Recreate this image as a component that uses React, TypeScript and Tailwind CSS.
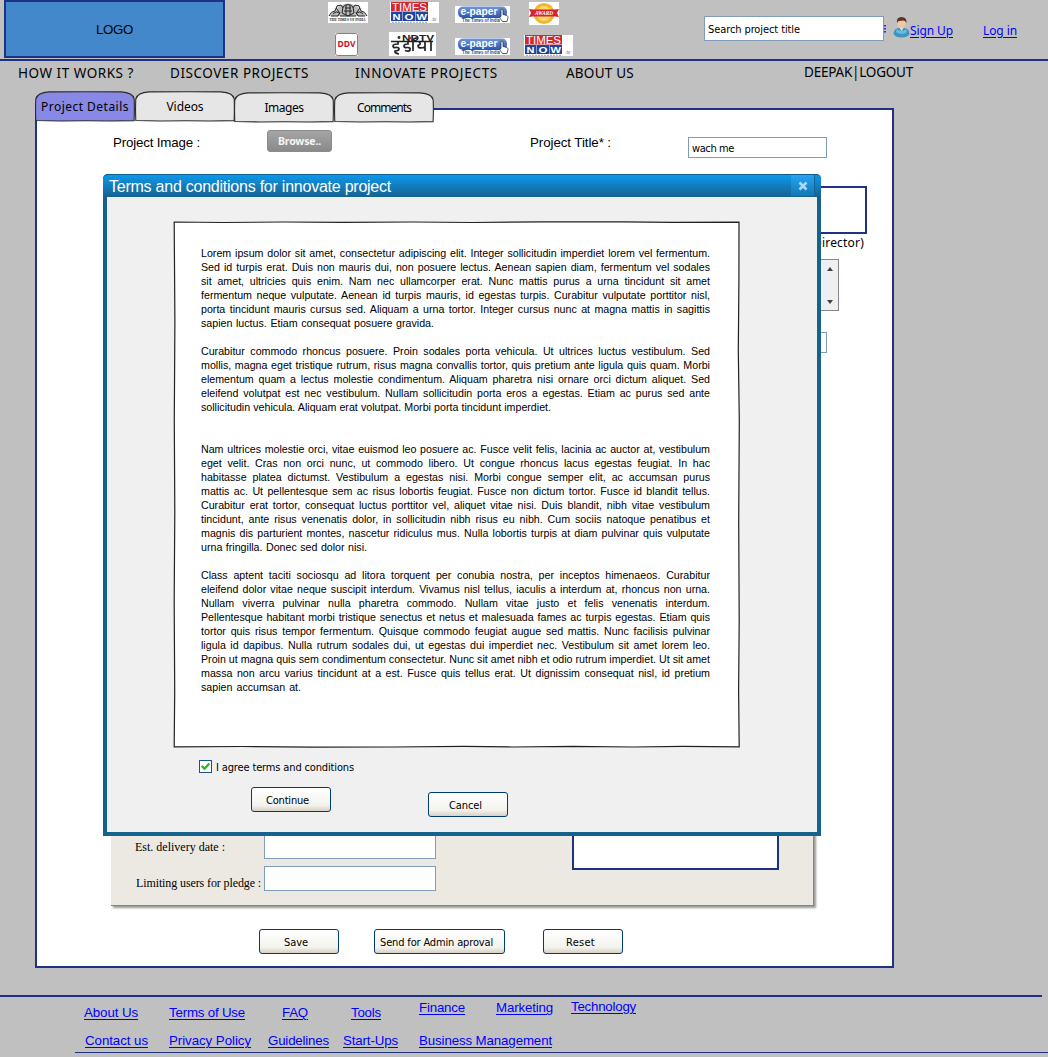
import { useLayoutEffect, useRef, useState } from "react";

type FitProps = {
  children: string;
  className?: string;
  by?: "letter" | "word";
  as?: "span" | "a";
};

// Spreads or tightens a single line of text so that it fills its box.
function Fit({ children, className = "", by = "letter", as: Tag = "span" }: FitProps) {
  const box = useRef<HTMLDivElement>(null);
  const line = useRef<HTMLElement>(null);
  const [gap, setGap] = useState(0);
  useLayoutEffect(() => {
    if (!box.current || !line.current) return;
    const count = by === "word" ? children.split(" ").length - 1 : children.length;
    const free = box.current.getBoundingClientRect().width - line.current.getBoundingClientRect().width;
    if (count > 0) setGap(free / count);
  }, []);
  return (
    <div ref={box} className={`shrink-0 whitespace-nowrap ${className}`}>
      <Tag
        ref={line as never}
        className={Tag === "a" ? "underline underline-offset-2" : ""}
        style={by === "word" ? { wordSpacing: gap } : { letterSpacing: gap }}
      >
        {children}
      </Tag>
    </div>
  );
}

const comic = "font-['Comic_Sans_MS','Noto_Sans',sans-serif]";
const tahoma = "font-['Tahoma','DejaVu_Sans_Condensed','Noto_Sans',sans-serif]";

function TimesNow({ className }: { className: string }) {
  return (
    <svg className={`shrink-0 overflow-visible ${className}`} width="49" height="21" viewBox="0 0 49 21">
      <rect width="49" height="21" fill="#fff" />
      <rect x="1" width="37" height="9.500" fill="#cf2a30" />
      <rect x="1" y="10" width="11.500" height="9" fill="#1f459c" />
      <rect x="13" y="10" width="12" height="9" fill="#1f459c" />
      <rect x="25.500" y="10" width="12.500" height="9" fill="#1f459c" />
      <g fill="#fff" fontFamily="Liberation Sans, sans-serif">
        <text x="2" y="8.500" fontSize="10.500" textLength="35" lengthAdjust="spacingAndGlyphs">TIMES</text>
        <g fontSize="9.500" fontWeight="bold">
          <text x="2.500" y="18" textLength="8" lengthAdjust="spacingAndGlyphs">N</text>
          <text x="14.500" y="18" textLength="9" lengthAdjust="spacingAndGlyphs">O</text>
          <text x="26.500" y="18" textLength="10.500" lengthAdjust="spacingAndGlyphs">W</text>
        </g>
      </g>
      <path d="M2 20.300h35" stroke="#7a7a9a" strokeWidth=".7" strokeDasharray="2 1" />
      <text x="41" y="19" fontSize="5" fill="#667" fontFamily="Liberation Sans, sans-serif">.tv</text>
    </svg>
  );
}

function EPaper({ className }: { className: string }) {
  return (
    <svg className={`shrink-0 overflow-visible ${className}`} width="55" height="17" viewBox="0 0 55 17">
      <defs>
        <linearGradient id="ep" x1="0" x2="0" y1="0" y2="1">
          <stop offset="0" stopColor="#7395d6" />
          <stop offset="1" stopColor="#2a55b0" />
        </linearGradient>
      </defs>
      <rect width="55" height="17" fill="#fff" />
      <rect x="3" y=".5" width="49" height="11.500" rx="5" fill="url(#ep)" />
      <text x="5.500" y="9" fontSize="10.500" fontWeight="bold" fill="#fff" textLength="37" lengthAdjust="spacingAndGlyphs" fontFamily="Liberation Sans, sans-serif">e-paper</text>
      <text x="7" y="16" fontSize="4.800" fontWeight="bold" fill="#334c7c" textLength="38" lengthAdjust="spacingAndGlyphs" fontFamily="Liberation Sans, sans-serif">The Times of India</text>
      <path d="M46 4.500q0-1.500 1-1.500t1 1.500v4l4 1q1 .5 1 2l-1 4h-4.500l-3-4 1.500-1z" fill="#fff" stroke="#222" strokeWidth=".7" />
    </svg>
  );
}

function TimesOfIndia() {
  return (
    <svg className="mt-0.5 shrink-0 overflow-visible" width="40" height="21" viewBox="0 0 40 21">
      <rect width="40" height="21" fill="#fff" />
      <path d="M2 14q2-5 6-5l2-4 4-2q6-3 12 0l4 2 2 4q4 0 6 5z" fill="#bbb" />
      <g stroke="#222" fill="none" strokeWidth="1">
        <path d="M1 14q2-5 6-5l2-5 4-1 2 3M39 14q-2-5-6-5l-2-5-4-1-2 3M3 14h7l2-4M37 14h-7l-2-4" />
        <path d="M15 5q5-5 10 0l1 6-6 3-6-3zM17 6h6M16 9h8M18 3v10M22 3v10M5 12q4-4 7 0M35 12q-4-4-7 0" />
        <path d="M8 6l3 4M32 6l-3 4M12 14h16" />
      </g>
      <text x="1.500" y="19" fontSize="4.500" fontWeight="bold" fill="#222" textLength="36" lengthAdjust="spacingAndGlyphs" fontFamily="Liberation Serif, serif">THE TIMES OF INDIA</text>
    </svg>
  );
}

function Medal() {
  return (
    <svg className="ml-[19px] mt-0.5 shrink-0" width="30" height="23" viewBox="0 0 30 23">
      <rect width="30" height="23" fill="#fff" />
      <circle cx="15" cy="11.500" r="10.500" fill="#efb72c" />
      <circle cx="15" cy="11.500" r="7.500" fill="#fbd968" />
      <path d="M0 7l4 .5 22 0 4-.5-2 4 2 4-4-.5-22 0-4 .5 2-4z" fill="#d7232a" />
      <text x="6" y="13" fontSize="6" fontWeight="bold" fontStyle="italic" fill="#fff" textLength="18" lengthAdjust="spacingAndGlyphs" fontFamily="Liberation Serif, serif">AWARD</text>
    </svg>
  );
}

function Ddv() {
  return (
    <svg className="ml-[15px] mt-px shrink-0" width="23" height="23" viewBox="0 0 23 23">
      <rect width="23" height="23" rx="1" fill="#fff" />
      <rect x=".5" y=".5" width="22" height="22" rx="2" fill="#fff" stroke="#b8384c" strokeWidth=".8" />
      <text x="2.500" y="14" fontSize="9" fontWeight="bold" fill="#c8102e" textLength="18" lengthAdjust="spacingAndGlyphs" fontFamily="Noto Sans, sans-serif">DDV</text>
    </svg>
  );
}

function NdtvIndia() {
  return (
    <svg className="ml-[31px] shrink-0 overflow-visible" width="47" height="24" viewBox="0 0 47 24">
      <rect width="47" height="24" fill="#fff" />
      <text x="13" y="9" fontSize="9" fontWeight="bold" fill="#222" textLength="32" lengthAdjust="spacingAndGlyphs" fontFamily="Liberation Sans, sans-serif">NDTV</text>
      <circle cx="22" cy="6" r="1.200" fill="#d22" />
      <g fill="none" stroke="#222" strokeWidth="1.700">
        <path d="M2 9.500h42" />
        <path d="M9 9.500v2.500q-5 0-5 2t3 1.500q3-.3 3 1.500t-4 2q-1 2 4 3" />
        <path d="M19 9.500v2.500q-4 0-4 2t3 1.500q4-.2 3 2.500-1 2-5 .5" />
        <path d="M24 19V9.500q0-3.500 4-3.500" />
        <path d="M30 9.500q3 2.500-1 4 0 4 7 1.500M36 9.500V19M42 9.500V19" />
        <circle cx="10" cy="5.500" r=".6" />
      </g>
    </svg>
  );
}

function UserIcon() {
  return (
    <svg className="mt-[17px] shrink-0" width="17" height="21" viewBox="0 0 17 21">
      <path d="M.5 17q0-5 5-6h6q5 1 5 6-2 3.500-8 3.500T.5 17z" fill="#3b95bf" />
      <path d="M4 12q4 4 9 0l1 3q-5 4-11 0z" fill="#6bbbe0" />
      <path d="M6 10l2.500 4 2.500-4z" fill="#f7e6d4" />
      <ellipse cx="8.500" cy="6.500" rx="4" ry="5" fill="#f0c9a4" />
      <path d="M4 6Q3 0 8.500 0T13.500 6q-1-2.500-3-2.500T5.500 4z" fill="#5b3423" />
    </svg>
  );
}

function Header() {
  return (
    <header className="flex h-[61px] shrink-0 border-b-2 border-[#1d3282]">
      <div className="ml-1 flex h-[58px] w-[221px] shrink-0 items-center justify-center border-2 border-[#1d3282] bg-[#4488cc]">
        <Fit className="mt-0.5 w-[37px] font-['Liberation_Sans',sans-serif] text-[13.3px] leading-4">LOGO</Fit>
      </div>
      <div className="ml-[103px] w-[270px] shrink-0">
        <div className="flex h-8">
          <TimesOfIndia />
          <TimesNow className="ml-[22px] mt-0.5" />
          <EPaper className="ml-4 mt-1.5" />
          <Medal />
        </div>
        <div className="-ml-2 flex h-7">
          <Ddv />
          <NdtvIndia />
          <EPaper className="ml-[19px] mt-1.5" />
          <TimesNow className="ml-3.5 mt-[3px]" />
        </div>
      </div>
      <div className="ml-[106px] mt-4 flex h-[25px] w-[180px] shrink-0 items-center border border-[#7f9db9] bg-white pl-[3px] pt-0.5">
        <Fit className={`w-[92px] text-[11px] leading-4 ${tahoma}`}>Search project title</Fit>
      </div>
      <svg className="mt-[25px] shrink-0" width="2" height="9" viewBox="0 0 2 9">
        <path d="M1 0v9" stroke="#0000ff" strokeWidth="1.500" strokeDasharray="1.500 1.500" />
      </svg>
      <div className="ml-[7px] flex">
        <UserIcon />
        <Fit as="a" className={`mt-[23px] w-[43px] text-[12px] leading-4 text-[#0000ff] ${comic}`}>Sign Up</Fit>
        <Fit as="a" className={`ml-[30px] mt-[23px] w-[34px] text-[12px] leading-4 text-[#0000ff] ${comic}`}>Log in</Fit>
      </div>
    </header>
  );
}

function Nav() {
  return (
    <nav className={`flex h-[30px] shrink-0 pl-[18px] pt-1 text-[13.5px] leading-4 ${comic}`}>
      <Fit className="w-[116px]">HOW IT WORKS ?</Fit>
      <Fit className="ml-9 w-[139px]">DISCOVER PROJECTS</Fit>
      <Fit className="ml-[46px] w-[143px]">INNOVATE PROJECTS</Fit>
      <Fit className="ml-[68px] w-[68px]">ABOUT US</Fit>
      <Fit className="-mt-px ml-[170px] w-[109px]">DEEPAK|LOGOUT</Fit>
    </nav>
  );
}

function Tab({ label, width, active, className = "" }: { label: string; width: string; active?: boolean; className?: string }) {
  return (
    <div className={`relative flex h-[31px] w-[100px] shrink-0 justify-center pt-2 ${className}`}>
      <svg className="absolute inset-0" width="100" height="31" viewBox="0 0 100 31">
        <path
          d="M.8 29.500Q.3 18 .8 8Q2.500 1.500 14 .9L52 .7 86 .9Q98 1.500 99.200 8q.4 12-.1 21.600L75 30l-24-.2-25 .2z"
          fill={active ? "#8888e6" : "#e6e6e6"}
          stroke="#2b2b2b"
          strokeWidth="1.100"
        />
      </svg>
      <Fit className={`relative text-[12px] leading-4 ${comic} ${width}`}>{label}</Fit>
    </div>
  );
}

function Btn({ label, className, text }: { label: string; className: string; text: string }) {
  return (
    <button className={`flex h-[25px] shrink-0 items-center rounded-[3px] border border-[#003c74] bg-linear-to-b from-white via-[#f3f3ee] via-75% to-[#d8d0c4] pt-0.5 text-left ${className}`}>
      <Fit className={`text-[11px] leading-4 ${tahoma} ${text}`}>{label}</Fit>
    </button>
  );
}

function Panel() {
  return (
    <main className="-mt-[14px] ml-[35px] flex h-[860px] w-[859px] shrink-0 flex-col border-2 border-[#1d3282] bg-white">
      <div className="flex h-[76px] shrink-0 font-['Liberation_Sans',sans-serif] text-[13.3px] leading-4">
        <Fit className="ml-[76px] mt-[25px] w-[87px]">Project Image :</Fit>
        <button className="ml-[67px] mt-5 flex h-[22px] w-[65px] items-center justify-center rounded-[3px] border border-[#8b8b8b] bg-linear-to-b from-[#a5a5a5] to-[#8a8a8a]">
          <Fit className="w-[43px] font-['Noto_Sans',sans-serif] text-[10.5px] font-bold leading-4 text-[#f5f5f5]">Browse..</Fit>
        </button>
        <Fit className="ml-[198px] mt-[25px] w-[81px]">Project Title* :</Fit>
        <div className="ml-[77px] mt-[27px] flex h-[21px] w-[139px] items-center border border-[#7f9db9] pl-[3px] pt-0.5">
          <Fit className={`w-[42px] text-[11px] leading-4 ${tahoma}`}>wach me</Fit>
        </div>
      </div>
      <div className="flex shrink-0 flex-col items-end">
        <div className="mr-[25px] h-12 w-[180px] border-2 border-[#1d3282]" />
        <Fit className={`mr-7 mt-px w-[51px] text-[12px] leading-4 ${comic}`}>Director)</Fit>
        <div className="mr-[53px] mt-2 flex h-[52px] w-[160px] justify-end border border-[#828790]">
          <div className="flex w-[17px] flex-col items-center justify-between bg-[#efefef] pb-1.5 pt-[7px]">
            <span className="size-0 border-x-[3px] border-b-4 border-x-transparent border-b-[#404040]" />
            <span className="size-0 border-x-[3px] border-t-4 border-x-transparent border-t-[#404040]" />
          </div>
        </div>
        <div className="mr-[65px] mt-[21px] h-[21px] w-[139px] border border-[#7f9db9]" />
      </div>
      <section className="ml-[74px] mt-auto flex h-[206px] w-[703px] shrink-0 items-end border-b border-r border-[#858585] bg-[#ece9e2] font-['Liberation_Serif',serif] text-[12px] leading-4 shadow-[2px_2px_2px_#999]">
        <div className="ml-6 flex h-[71px] w-[129px] flex-col">
          <Fit className="mt-[5px] w-[90px]">Est. delivery date :</Fit>
          <Fit className="ml-px mt-5 w-[125px]">Limiting users for pledge :</Fit>
        </div>
        <div className="h-[71px]">
          <div className="h-[25px] w-[172px] border border-[#7f9db9] bg-white" />
          <div className="mt-[7px] h-[25px] w-[172px] border border-[#7f9db9] bg-white" />
        </div>
        <div className="mb-[35px] ml-[136px] h-[50px] w-[207px] border-2 border-[#1d3282] bg-white" />
      </section>
      <div className="mt-[23px] flex h-[37px] shrink-0">
        <Btn label="Save" className="ml-[222px] w-20 pl-6" text="w-[24px]" />
        <Btn label="Send for Admin aproval" className="ml-[35px] w-[131px] pl-[5px]" text="w-[113px]" />
        <Btn label="Reset" className="ml-[38px] w-20 pl-[22px]" text="w-[29px]" />
      </div>
    </main>
  );
}

const terms: { lines: string[]; last: string; space: string }[] = [
  {
    space: "",
    last: "w-[233px]",
    lines: [
      "Lorem ipsum dolor sit amet, consectetur adipiscing elit. Integer sollicitudin imperdiet lorem vel fermentum.",
      "Sed id turpis erat. Duis non mauris dui, non posuere lectus. Aenean sapien diam, fermentum vel sodales",
      "sit amet, ultricies quis enim. Nam nec ullamcorper erat. Nunc mattis purus a urna tincidunt sit amet",
      "fermentum neque vulputate. Aenean id turpis mauris, id egestas turpis. Curabitur vulputate porttitor nisl,",
      "porta tincidunt mauris cursus sed. Aliquam a urna tortor. Integer cursus nunc at magna mattis in sagittis",
      "sapien luctus. Etiam consequat posuere gravida.",
    ],
  },
  {
    space: "mt-3.5",
    last: "w-[350px]",
    lines: [
      "Curabitur commodo rhoncus posuere. Proin sodales porta vehicula. Ut ultrices luctus vestibulum. Sed",
      "mollis, magna eget tristique rutrum, risus magna convallis tortor, quis pretium ante ligula quis quam. Morbi",
      "elementum quam a lectus molestie condimentum. Aliquam pharetra nisi ornare orci dictum aliquet. Sed",
      "eleifend volutpat est nec vestibulum. Nullam sollicitudin porta eros a egestas. Etiam ac purus sed ante",
      "sollicitudin vehicula. Aliquam erat volutpat. Morbi porta tincidunt imperdiet.",
    ],
  },
  {
    space: "mt-7",
    last: "w-[166px]",
    lines: [
      "Nam ultrices molestie orci, vitae euismod leo posuere ac. Fusce velit felis, lacinia ac auctor at, vestibulum",
      "eget velit. Cras non orci nunc, ut commodo libero. Ut congue rhoncus lacus egestas feugiat. In hac",
      "habitasse platea dictumst. Vestibulum a egestas nisi. Morbi congue semper elit, ac accumsan purus",
      "mattis ac. Ut pellentesque sem ac risus lobortis feugiat. Fusce non dictum tortor. Fusce id blandit tellus.",
      "Curabitur erat tortor, consequat luctus porttitor vel, aliquet vitae nisi. Duis blandit, nibh vitae vestibulum",
      "tincidunt, ante risus venenatis dolor, in sollicitudin nibh risus eu nibh. Cum sociis natoque penatibus et",
      "magnis dis parturient montes, nascetur ridiculus mus. Nulla lobortis turpis at diam pulvinar quis vulputate",
      "urna fringilla. Donec sed dolor nisi.",
    ],
  },
  {
    space: "mt-3.5",
    last: "w-[100px]",
    lines: [
      "Class aptent taciti sociosqu ad litora torquent per conubia nostra, per inceptos himenaeos. Curabitur",
      "eleifend dolor vitae neque suscipit interdum. Vivamus nisl tellus, iaculis a interdum at, rhoncus non urna.",
      "Nullam viverra pulvinar nulla pharetra commodo. Nullam vitae justo et felis venenatis interdum.",
      "Pellentesque habitant morbi tristique senectus et netus et malesuada fames ac turpis egestas. Etiam quis",
      "tortor quis risus tempor fermentum. Quisque commodo feugiat augue sed mattis. Nunc facilisis pulvinar",
      "ligula id dapibus. Nulla rutrum sodales dui, ut egestas dui imperdiet nec. Vestibulum sit amet lorem leo.",
      "Proin ut magna quis sem condimentum consectetur. Nunc sit amet nibh et odio rutrum imperdiet. Ut sit amet",
      "massa non arcu varius tincidunt at a est. Fusce quis tellus erat. Ut dignissim consequat nisl, id pretium",
      "sapien accumsan at.",
    ],
  },
];

function Dialog() {
  return (
    <div className="absolute left-[103px] top-[174px] z-20 flex h-[662px] w-[718px] flex-col rounded-t-[5px] bg-[#15628c]">
      <div className="flex h-[23px] shrink-0 justify-between rounded-t-[5px] border-t border-[#126091] bg-linear-to-b from-[#0998ec] to-[#15628f] pl-1.5 pr-1.5">
        <Fit className="mt-0.5 w-[282px] font-['Liberation_Sans',sans-serif] text-[16px] leading-5 text-white">Terms and conditions for innovate project</Fit>
        <div className="flex h-[21px] w-6 items-center justify-center border-r border-[#146394] bg-linear-to-b from-[#28a4ef] to-[#1178b5]">
          <svg width="10" height="10" viewBox="0 0 10 10">
            <path d="M1.500 1.500l7 7M8.500 1.500l-7 7" stroke="#a9d9f4" strokeWidth="2.600" />
          </svg>
        </div>
      </div>
      <div className="mx-1 mb-1 flex flex-1 flex-col bg-[#f0f0f0]">
        <div className="relative ml-[66px] mt-6 h-[527px] w-[567px] shrink-0 pl-7 pt-[25px]">
          <svg className="absolute inset-0" width="567" height="527" viewBox="0 0 567 527">
            <path
              d="M1.200 1L50 1.500 110 1 170 1.400 240 1 300 1.500 370 .9 450 .8 500 1.400 566 1.100 565.900 60 565.300 130 566.300 200 565.700 300 566.200 400 565.600 470 566.200 525.800 510 525.400 460 526 400 525.300 340 526 290 525.400 220 526 140 526.100 70 525.500 1.200 525.800 1.700 470 1.200 380 1.800 290 1.300 200 1.900 100z"
              fill="#fff"
              stroke="#222"
              strokeWidth="1.200"
            />
          </svg>
          <div className="relative font-['Liberation_Sans',sans-serif] text-[10.67px] leading-[14px] text-black">
            {terms.map((p) => (
              <div key={p.lines[0]} className={p.space}>
                {p.lines.map((l, i) => (
                  <Fit key={l} by="word" className={i === p.lines.length - 1 ? p.last : "w-[509px]"}>
                    {l}
                  </Fit>
                ))}
              </div>
            ))}
          </div>
        </div>
        <div className="ml-[92px] mt-3 flex h-4 items-start">
          <span className="flex size-[13px] items-center justify-center border border-[#1c5180] bg-white">
            <svg width="9" height="9" viewBox="0 0 9 9">
              <path d="M.8 3.800l2.700 2.900L8.300 1.600" fill="none" stroke="#2db52d" strokeWidth="2.300" />
            </svg>
          </span>
          <Fit className={`ml-1 w-[138px] text-[11px] leading-4 ${tahoma}`}>I agree terms and conditions</Fit>
        </div>
        <div className="ml-36 mt-[11px] flex">
          <Btn label="Continue" className="w-20 pl-3.5" text="w-[43px]" />
          <Btn label="Cancel" className="ml-[97px] mt-[5px] w-20 pl-5" text="w-[33px]" />
        </div>
      </div>
    </div>
  );
}

function Footer() {
  return (
    <footer className="mt-[27px] flex-1 font-['Liberation_Sans',sans-serif] text-[13.3px] leading-4 text-[#0000ff]">
      <div className="h-0.5 w-[1042px] bg-[#1d3282]" />
      <div className="flex h-7 pl-[84px] pt-2">
        <Fit as="a" className="w-[54px]">About Us</Fit>
        <Fit as="a" className="ml-[31px] w-[76px]">Terms of Use</Fit>
        <Fit as="a" className="ml-[37px] w-[26px]">FAQ</Fit>
        <Fit as="a" className="ml-[43px] w-[30px]">Tools</Fit>
        <Fit as="a" className="-mt-[5px] ml-[38px] w-[46px]">Finance</Fit>
        <Fit as="a" className="-mt-[5px] ml-[31px] w-[57px]">Marketing</Fit>
        <Fit as="a" className="-mt-1.5 ml-[18px] w-[65px]">Technology</Fit>
      </div>
      <div className="flex h-[27px] pl-[85px] pt-2">
        <Fit as="a" className="w-[63px]">Contact us</Fit>
        <Fit as="a" className="ml-[21px] w-[82px]">Privacy Policy</Fit>
        <Fit as="a" className="ml-[17px] w-[61px]">Guidelines</Fit>
        <Fit as="a" className="ml-[14px] w-[55px]">Start-Ups</Fit>
        <Fit as="a" className="ml-[21px] w-[133px]">Business Management</Fit>
      </div>
      <div className="ml-[75px] h-px bg-[#1d3282]" />
    </footer>
  );
}

export default function App() {
  return (
    <div className="relative flex h-[1057px] w-[1048px] flex-col overflow-hidden bg-[#c0c0c0] text-black">
      <Header />
      <Nav />
      <div className="relative z-10 ml-[35px] flex h-[31px] shrink-0">
        <Tab label="Project Details" width="w-[88px]" active />
        <Tab label="Videos" width="w-[37px]" />
        <Tab label="Images" width="w-[39px]" className="-ml-px mt-px" />
        <Tab label="Comments" width="w-[54px]" className="mt-px" />
      </div>
      <Panel />
      <Dialog />
      <Footer />
    </div>
  );
}
